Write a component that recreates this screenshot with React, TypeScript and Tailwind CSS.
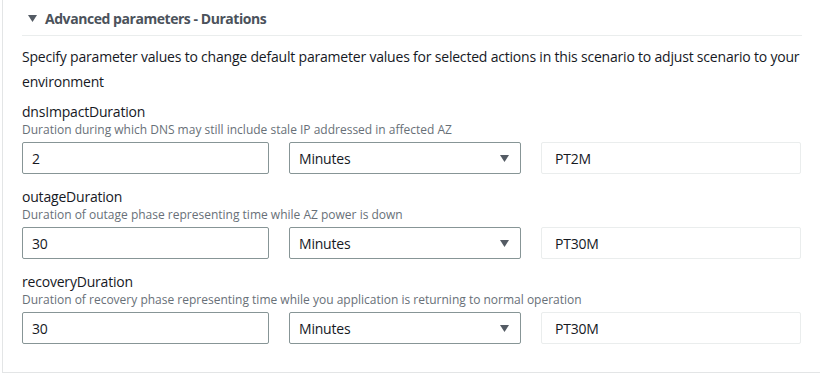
import React from "react";

const rows = [
  { name: "dnsImpactDuration", help: "Duration during which DNS may still include stale IP addressed in affected AZ", value: "2", iso: "PT2M" },
  { name: "outageDuration", help: "Duration of outage phase representing time while AZ power is down", value: "30", iso: "PT30M" },
  { name: "recoveryDuration", help: "Duration of recovery phase representing time while you application is returning to normal operation", value: "30", iso: "PT30M" },
];

function Caret() {
  return (
    <svg width="9" height="7" viewBox="0 0 9 7">
      <path d="M0 0h9L4.5 7z" fill="#545b64" />
    </svg>
  );
}

export default function App() {
  return (
    <div className="w-[820px] h-[378px] bg-white overflow-hidden text-[#16191f]" style={{ fontFamily: '"Open Sans", sans-serif' }}>
      <div className="ml-[2px] h-[373px] border-l border-b border-[#e3e5e6] pl-[19px] pr-[18px]">
        <div className="h-[36px] flex items-center gap-[8px] border-b border-[#eaeded] pl-[6px] pt-[2px]">
          <Caret />
          <span className="text-[14px] font-bold tracking-[-0.45px] text-[#4b525b]">Advanced parameters - Durations</span>
        </div>
        <p className="mt-[8px] text-[14px] leading-[25px] tracking-[-0.2px] text-[#16191f]">
          Specify parameter values to change default parameter values for selected actions in this scenario to adjust scenario to your environment
        </p>
        <div className="mt-[8px] flex flex-col gap-[13px]">
          {rows.map((r) => (
            <div key={r.name} className="flex flex-col">
              <div className="text-[14px] leading-[20px] tracking-[-0.2px] text-[#16191f]">{r.name}</div>
              <div className="text-[12px] leading-[16px] text-[#687078]">{r.help}</div>
              <div className="mt-[4px] flex gap-[20px] text-[14px] tracking-[-0.2px]">
                <div className="w-[247px] h-[32px] border border-[#879596] rounded-[2px] flex items-center px-[9px]">{r.value}</div>
                <div className="w-[232px] h-[32px] border border-[#879596] rounded-[2px] flex items-center justify-between pl-[9px] pr-[11px]">
                  <span>Minutes</span>
                  <Caret />
                </div>
                <div className="w-[260px] h-[32px] border border-[#eaeded] rounded-[2px] flex items-center px-[13px]">{r.iso}</div>
              </div>
            </div>
          ))}
        </div>
      </div>
    </div>
  );
}
